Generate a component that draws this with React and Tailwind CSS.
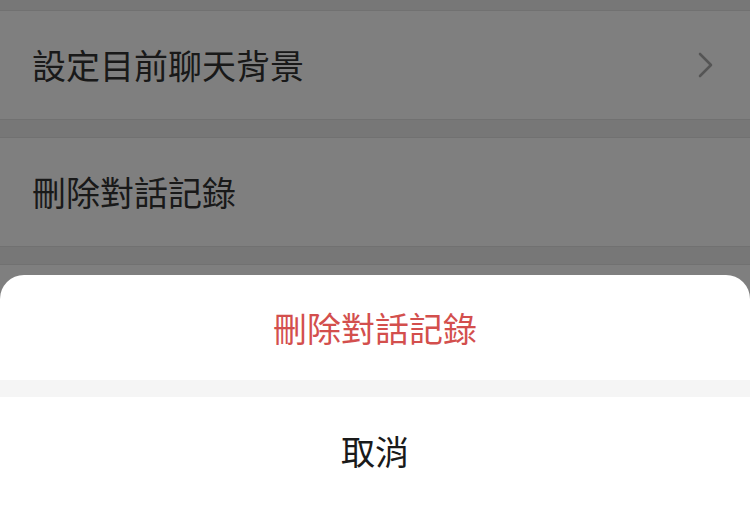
import React from "react";

const cjk = { fontFamily: '"Noto Sans CJK TC", "Noto Sans", sans-serif' };

function Row({ label, chevron }) {
  return (
    <div className="flex items-center justify-between h-[110px] bg-white border-y border-[#e2e2e2] pl-[32px] pr-[36px]">
      <span className="text-[34px] leading-none text-[#333]">{label}</span>
      {chevron && (
        <svg width="16" height="26" viewBox="0 0 16 26" fill="none">
          <polyline points="2,2 13,13 2,24" stroke="#ababab" strokeWidth="2.6" strokeLinecap="round" strokeLinejoin="round" />
        </svg>
      )}
    </div>
  );
}

export default function App() {
  return (
    <div className="relative w-[750px] h-[509px] overflow-hidden bg-[#eeeeee]" style={cjk}>
      <div className="flex flex-col gap-[17px] pt-[10px]">
        <Row label="設定目前聊天背景" chevron />
        <Row label="刪除對話記錄" />
        <Row label="" />
      </div>

      <div className="absolute inset-0 bg-black/50" />

      <div className="absolute left-0 right-0 bottom-0 top-[275px] bg-white rounded-t-[24px] overflow-hidden flex flex-col">
        <button className="h-[105px] shrink-0 flex items-center justify-center text-[34px] leading-none text-[#d34f4d]">
          刪除對話記錄
        </button>
        <div className="h-[17px] shrink-0 bg-[#f5f5f5]" />
        <button className="flex-1 flex items-center justify-center text-[34px] leading-none text-[#1a1a1a] pb-[4px]">
          取消
        </button>
      </div>
    </div>
  );
}
